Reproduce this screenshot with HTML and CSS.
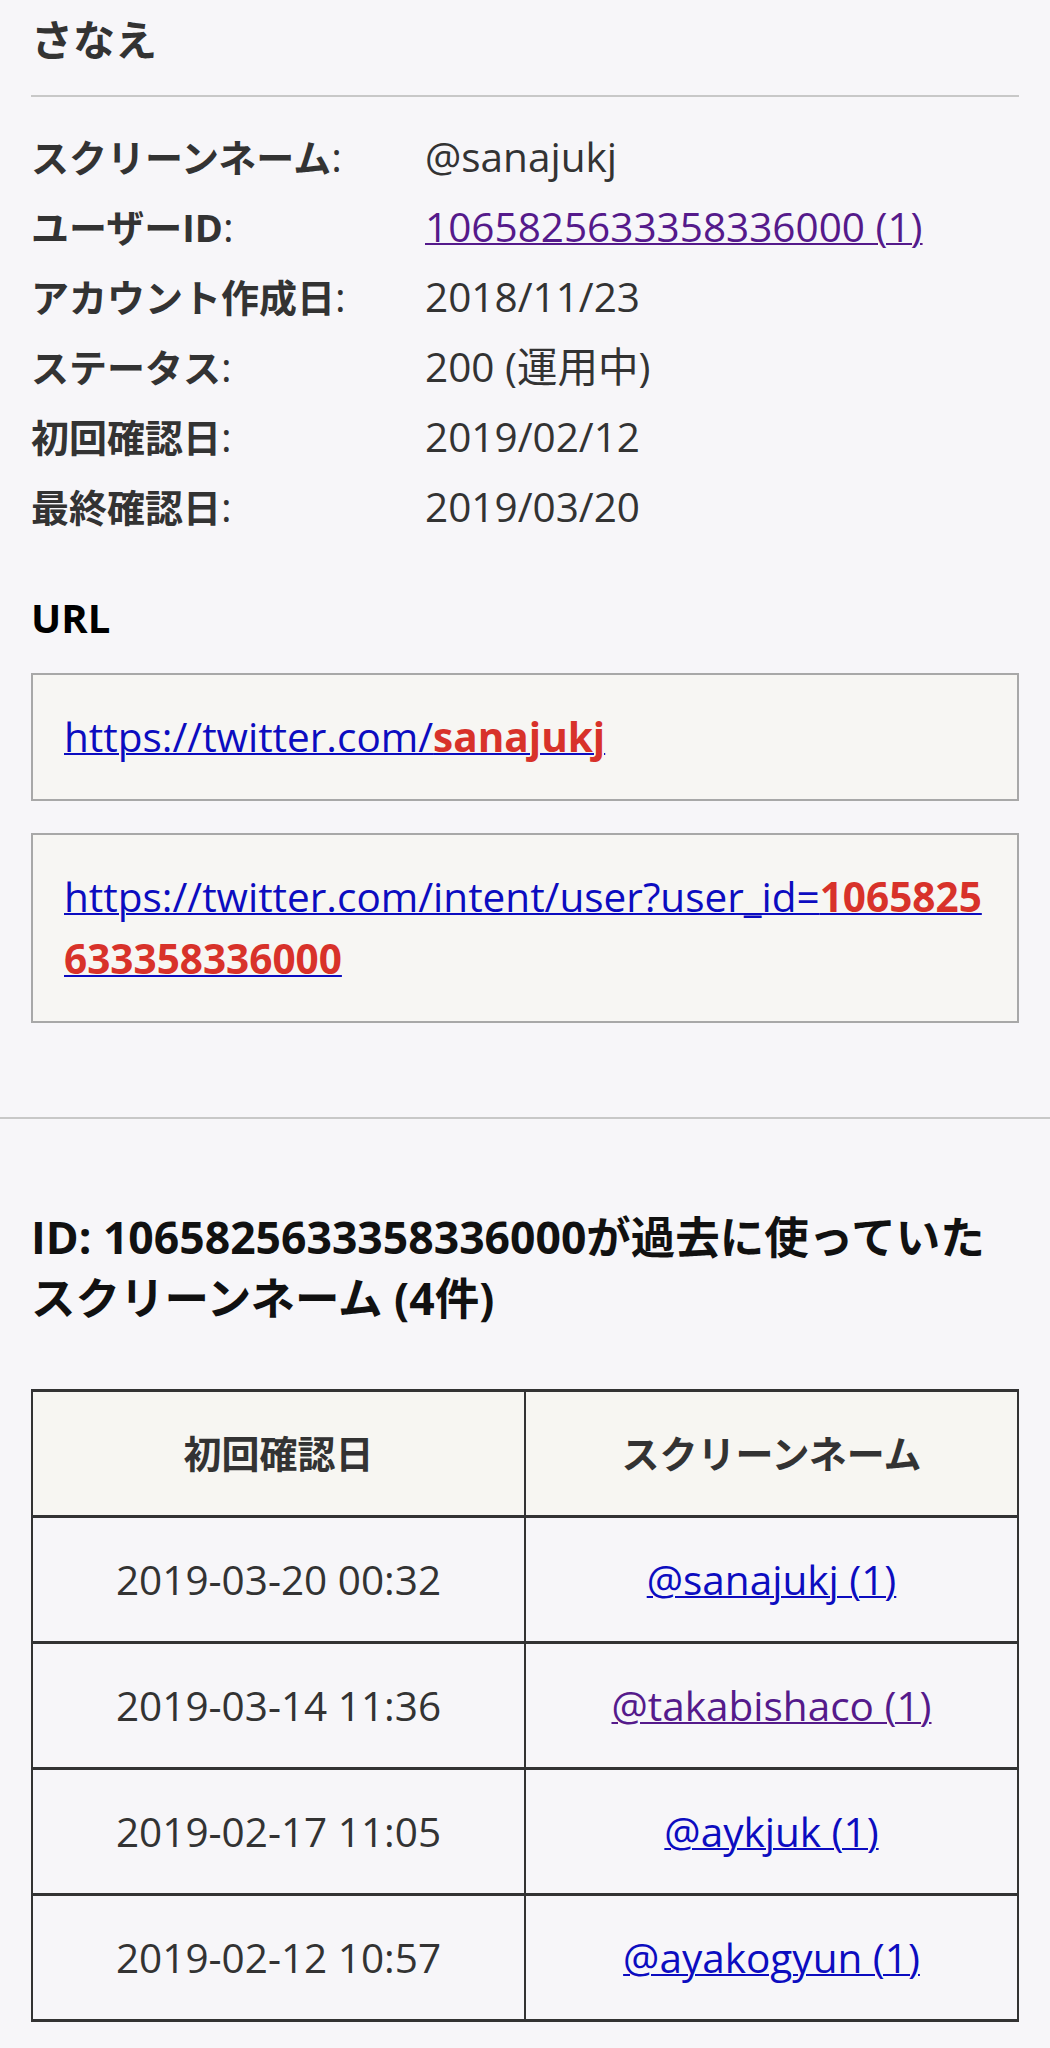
FILE: index.html
```html
<!DOCTYPE html>
<html lang="ja">

<head>
    <meta charset="UTF-8">
    <meta name="viewport" content="width=device-width, initial-scale=1.0">
    <title>さなえ (@sanajukj)</title>
    <link rel="stylesheet" href="styles.css">
</head>

<body>
    <div class="profile">
        <h1 class="user-name">さなえ</h1>
        <hr class="name-rule">
        <div class="info">
            <div class="info-label"><span>スクリーンネーム</span>:</div>
            <div class="info-value">@sanajukj</div>
            <div class="info-label"><span>ユーザーID</span>:</div>
            <div class="info-value"><a class="visited" href="#">1065825633358336000 (1)</a></div>
            <div class="info-label"><span>アカウント作成日</span>:</div>
            <div class="info-value">2018/11/23</div>
            <div class="info-label"><span>ステータス</span>:</div>
            <div class="info-value">200 (運用中)</div>
            <div class="info-label"><span>初回確認日</span>:</div>
            <div class="info-value">2019/02/12</div>
            <div class="info-label"><span>最終確認日</span>:</div>
            <div class="info-value">2019/03/20</div>
        </div>

        <h3 class="url-title">URL</h3>
        <div class="url-box">
            <a href="#">https://twitter.com/<b class="hl">sanajukj</b></a>
        </div>
        <div class="url-box">
            <a href="#">https://twitter.com/intent/user?user_id=<b class="hl">1065825633358336000</b></a>
        </div>
    </div>

    <hr class="section-rule">

    <div class="history">
        <h2 class="history-title">ID: 1065825633358336000が過去に使っていたスクリーンネーム (4件)</h2>
        <table class="history-table">
            <thead>
                <tr>
                    <th>初回確認日</th>
                    <th>スクリーンネーム</th>
                </tr>
            </thead>
            <tbody>
                <tr>
                    <td>2019-03-20 00:32</td>
                    <td><a href="#">@sanajukj (1)</a></td>
                </tr>
                <tr>
                    <td>2019-03-14 11:36</td>
                    <td><a class="visited" href="#">@takabishaco (1)</a></td>
                </tr>
                <tr>
                    <td>2019-02-17 11:05</td>
                    <td><a href="#">@aykjuk (1)</a></td>
                </tr>
                <tr>
                    <td>2019-02-12 10:57</td>
                    <td><a href="#">@ayakogyun (1)</a></td>
                </tr>
            </tbody>
        </table>
    </div>
</body>

</html>
```

FILE: styles.css
```css
body {
    margin: 0;
    background-color: #f7f6f9;
    color: #333;
    font-family: "Open Sans", "Noto Sans CJK JP", sans-serif;
    font-size: 40.5px;
}

a {
    color: #0c0cc0;
    text-decoration: underline;
    text-decoration-thickness: 2px;
}

a.visited {
    color: #551a8b;
}

.hl {
    color: #d8322a;
    font-weight: 700;
}

.profile {
    padding: 0 31px;
}

.user-name {
    margin: 12px 0 27px;
    font-size: 42px;
    line-height: 56px;
    font-weight: 700;
    color: #333;
}

.name-rule {
    margin: 0;
    border: none;
    border-top: 2px solid #c8c8c8;
}

.info {
    display: grid;
    grid-template-columns: 394px 1fr;
    margin-top: 25px;
    line-height: 70px;
}

.info-label span {
    font-size: 38px;
    font-weight: 700;
}

.url-title {
    margin: 48px 0 0;
    font-size: 40px;
    line-height: 55px;
    font-weight: 700;
    color: #000;
}

.url-box {
    margin-top: 28px;
    padding: 31px;
    border: 2px solid #a8a8a8;
    background-color: #f7f6f3;
    line-height: 62px;
    word-break: break-all;
}

.url-box + .url-box {
    margin-top: 32px;
}

.section-rule {
    margin: 94px 0 0;
    border: none;
    border-top: 2px solid #c8c8c8;
}

.history {
    padding: 0 31px;
}

.history-title {
    margin: 87px 0 0;
    font-size: 44.5px;
    line-height: 61px;
    font-weight: 700;
    color: #111;
}

.history-table {
    width: 100%;
    margin-top: 61px;
    border-collapse: collapse;
    table-layout: fixed;
}

.history-table th,
.history-table td {
    padding: 30px 10px;
    border-top: 3px solid #333;
    border-bottom: 3px solid #333;
    border-left: 2px solid #333;
    border-right: 2px solid #333;
    line-height: 63px;
    text-align: center;
}

.history-table th {
    background-color: #f7f6f2;
    font-size: 38px;
    font-weight: 700;
}
```
